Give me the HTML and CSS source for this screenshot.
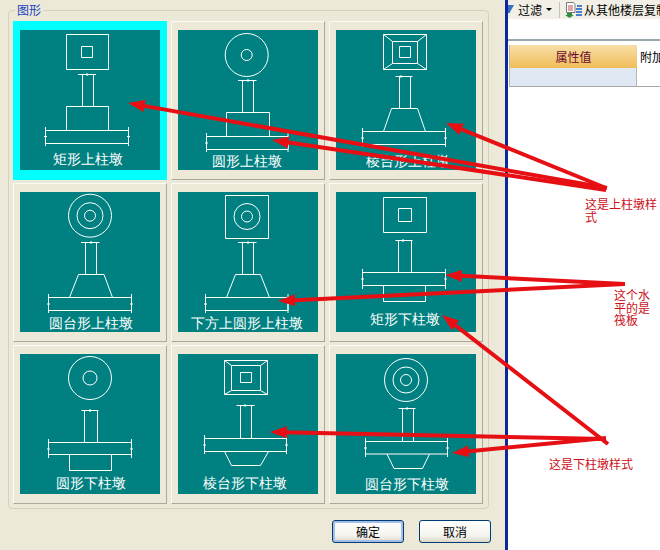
FILE: index.html
```html
<!DOCTYPE html>
<html lang="zh">
<head>
<meta charset="utf-8">
<title>图形</title>
<link rel="stylesheet" href="styles.css">
</head>
<body>
<div class="screen">
  <section class="dialog">
    <div class="group">
      <span class="legend">图形</span>
      <div class="tiles">
        <button class="tile tile-selected"><svg class="art" viewBox="0 0 140 140">
          <path d="M46.5 4.5h42v35h-42zM61.5 16.5h11v11h-11zM58 44.500h18M62.500 44.500v32M73.500 44.500v32M67 43v3M46.500 76.500h42v24M46.500 76.500v24M25.500 100.500h83v13h-83zM25.500 97v19M108.500 97v19M24 106.500h3M107 106.500h3"/>
          <text x="68" y="134">矩形上柱墩</text></svg></button>
        <button class="tile"><svg class="art" viewBox="0 0 140 140">
          <circle cx="68.700" cy="25" r="21.500"/><circle cx="68.700" cy="25" r="5.500"/>
          <path d="M60 50.500h18.500M64.500 50.500v32M75.500 50.500v32M70 49v3M48.500 82.500h43v24M48.500 82.500v24M28.500 106.500h81.500v13h-81.500zM28.500 103v19M110 103v19M27 113h3"/>
          <text x="68.700" y="136">圆形上柱墩</text></svg></button>
        <button class="tile"><svg class="art" viewBox="0 0 140 140">
          <path d="M47.500 4.500h43v35h-43zM56.500 11.500h25v22h-25zM63.500 16.500h11v11h-11zM47.500 4.500l9 7M90.500 4.500l-9 7M47.500 39.500l9-6M90.500 39.500l-9-6M59.500 46.500h17M63.500 46.500v32M74.500 46.500v32M65 45v3M55.500 78.500h26l8 23M55.500 78.500l-8 23M26.500 101.500h83v13h-83zM26.500 98v19M109.500 98v19M25 108h3M108 108h3"/>
          <text x="71.700" y="136">棱台形上柱墩</text></svg></button>
        <button class="tile"><svg class="art" viewBox="0 0 140 140">
          <circle cx="70" cy="23.700" r="21.500"/><circle cx="70" cy="23.700" r="13"/><circle cx="70" cy="23.700" r="5.500"/>
          <path d="M61 50.500h18.500M65.500 50.500v32M76.500 50.500v32M71 49v3M58.500 82.500h25.500l8.500 23M58.500 82.500l-9 23M28.500 105.500h83v13h-83zM28.500 102v19M111.500 102v19M27 112h3M110 112h3"/>
          <text x="70.500" y="136">圆台形上柱墩</text></svg></button>
        <button class="tile"><svg class="art" viewBox="0 0 140 140">
          <path d="M47.500 3.500h43v43h-43z"/><circle cx="69" cy="24.500" r="13"/><circle cx="69" cy="24.500" r="5.500"/>
          <path d="M60 50.500h18.500M64.500 50.500v32M75.500 50.500v32M70 49v3M57.500 82.500h25l9 23M57.500 82.500l-9 23M27.500 105.500h82.500v13h-82.500zM27.500 102v19M110 102v19M26 112h3"/>
          <text x="68.700" y="136">下方上圆形上柱墩</text></svg></button>
        <button class="tile"><svg class="art" viewBox="0 0 140 140">
          <path d="M47.500 5.500h43v35h-43zM62.500 16.500h13v13h-13zM59.500 48.500h17M62.500 48.500v32M75.500 48.500v32M67 47v3M26.500 80.500h83v13h-83zM26.500 77v20M109.500 77v20M25 87h3M108 87h3M47.500 93.500v16h42v-16"/>
          <text x="68.700" y="132">矩形下柱墩</text></svg></button>
        <button class="tile"><svg class="art" viewBox="0 0 140 140">
          <circle cx="70" cy="24" r="21.500"/><circle cx="70" cy="24" r="7"/>
          <path d="M61.500 56.500h17M64.500 56.500v32M77.500 56.500v32M70 55v3M28.500 88.500h83v12h-83zM28.500 85v19M111.500 85v19M27 95h3M110 95h3M49.500 100.500v16h42v-16"/>
          <text x="70.500" y="134">圆形下柱墩</text></svg></button>
        <button class="tile"><svg class="art" viewBox="0 0 140 140">
          <path d="M46.500 6.500h43v34h-43zM53.500 11.500h29v25h-29zM62.500 18.500h11v10h-11zM46.500 6.500l7 5M89.500 6.500l-7 5M46.500 40.500l7-4M89.500 40.500l-7-4M58.500 51.500h18M62.500 51.500v33M73.500 51.500v33M67 50v3M26.500 84.500h82v13h-82zM26.500 81v19M108.500 81v19M25 91h3M107 91h3M46.500 97.500l7 14h29l8-14"/>
          <text x="66.700" y="134">棱台形下柱墩</text></svg></button>
        <button class="tile"><svg class="art" viewBox="0 0 140 140">
          <circle cx="70" cy="26" r="21.500"/><circle cx="70" cy="26" r="13"/><circle cx="70" cy="26" r="5.500"/>
          <path d="M62.500 54.500h17M66.500 54.500v33M77.500 54.500v33M71 53v3M29.500 87.500h82v12.500h-82zM29.500 84v19M111.500 84v19M28 94h3M110 94h3M51 100l7 14.500h28.500l7-14.500"/>
          <text x="71" y="135">圆台形下柱墩</text></svg></button>
      </div>
    </div>
    <div class="actions">
      <button class="btn btn-default">确定</button>
      <button class="btn">取消</button>
    </div>
  </section>

  <div class="divider"></div>

  <section class="panel">
    <div class="toolbar">
      <svg class="tool-funnel" viewBox="0 0 6 14"><path d="M0 2h6L2 9v1H0z"/></svg>
      <span class="tool-label">过滤</span>
      <span class="tool-caret"></span>
      <span class="tool-sep"></span>
      <svg class="tool-copy" viewBox="0 0 17 16">
        <path class="doc" d="M1.500.5h7l1.500 2v8h-8.500z"/>
        <path class="doc-lines" d="M3 4h5M3 6h5M3 8h5"/>
        <path class="doc-arrow" d="M2 11h5v2h2l-4.500 3-4.500-3h2z"/>
        <path class="doc-bars" d="M12 3h5v2h-5zM11 6h6v2h-6zM11 9h6v2h-6zM11 12h6v2h-6z"/>
      </svg>
      <span class="tool-label">从其他楼层复制</span>
    </div>
    <div class="blank"></div>
    <div class="rule"></div>
    <div class="grid">
      <div class="grid-head">属性值</div>
      <div class="grid-next">附加</div>
      <div class="grid-cell"></div>
      <div class="grid-cell-next"></div>
    </div>
  </section>

  <svg class="arrows" viewBox="0 0 660 550">
    <defs>
      <marker id="head" markerUnits="userSpaceOnUse" markerWidth="18" markerHeight="14" refX="5" refY="7" orient="auto">
        <path d="M0 1l17 6-17 6z"/>
      </marker>
    </defs>
    <line x1="607" y1="188" x2="139.800" y2="105.100" marker-end="url(#head)"/>
    <line x1="606" y1="190" x2="283.900" y2="141.800" marker-end="url(#head)"/>
    <line x1="606" y1="188" x2="457.100" y2="127.500" marker-end="url(#head)"/>
    <line x1="625" y1="284" x2="457" y2="275.600" marker-end="url(#head)"/>
    <line x1="625" y1="284" x2="290" y2="300.400" marker-end="url(#head)"/>
    <line x1="608" y1="444" x2="451.500" y2="322.300" marker-end="url(#head)"/>
    <line x1="606" y1="439" x2="282" y2="432.200" marker-end="url(#head)"/>
    <line x1="606" y1="438" x2="464" y2="451.800" marker-end="url(#head)"/>
  </svg>

  <p class="note note-upper">这是上柱墩样式</p>
  <p class="note note-raft">这个水平的是筏板</p>
  <p class="note note-lower">这是下柱墩样式</p>
</div>
</body>
</html>
```

FILE: styles.css
```css
* {
  box-sizing: border-box;
}

html,
body {
  margin: 0;
  padding: 0;
  background: #ece9d8;
}

.screen {
  position: relative;
  display: flex;
  width: 660px;
  height: 550px;
  overflow: hidden;
  font-family: "Noto Sans CJK SC", "Liberation Sans", sans-serif;
  font-size: 12px;
}

.dialog {
  width: 505px;
  padding: 10px 14px 0 8px;
  background: #ece9d8;
}

.group {
  position: relative;
  width: 481px;
  height: 499px;
  padding: 10px 4px 0 4px;
  border: 1px solid #d4d1bf;
  border-radius: 4px;
}

.legend {
  position: absolute;
  top: -9px;
  left: 6px;
  padding: 0 2px;
  background: #ece9d8;
  color: #1a3fc0;
  line-height: 16px;
}

.tiles {
  display: grid;
  grid-template-columns: repeat(3, 154px);
  grid-auto-rows: 159px;
  gap: 3px 4px;
}

.tile {
  display: block;
  margin: 0;
  padding: 8px 6px 9px 6px;
  border: 1px solid;
  border-color: #fbfaf4 #aca899 #aca899 #fbfaf4;
  background: #ece9d8;
}

.tile-selected {
  border-color: #00ffff;
  background: #00ffff;
}

.art {
  display: block;
  width: 140px;
  height: 140px;
  background: #008080;
  fill: none;
  stroke: #fff;
  stroke-width: 1;
}

.art text {
  fill: #fff;
  stroke: none;
  font-size: 14px;
  font-weight: 300;
  text-anchor: middle;
}

.actions {
  display: flex;
  justify-content: flex-end;
  gap: 15px;
  margin-top: 11px;
}

.btn {
  width: 72px;
  height: 23px;
  padding: 0;
  border: 1px solid #003c74;
  border-radius: 3px;
  background: linear-gradient(#fff, #f4f3ee 70%, #dcd8c8);
  color: #000;
  font: inherit;
  line-height: 20px;
}

.btn-default {
  box-shadow: inset 0 0 0 2px #a6bde8;
}

.divider {
  flex: none;
  width: 3px;
  background: #0a2a9c;
}

.panel {
  flex: 1;
  min-width: 0;
  overflow: hidden;
  background: #fff;
}

.toolbar {
  display: flex;
  align-items: center;
  height: 19px;
  background: #f2f0e6;
  white-space: nowrap;
}

.tool-funnel {
  flex: none;
  width: 6px;
  height: 14px;
  fill: #3a6fc4;
}

.tool-label {
  flex: none;
  color: #000;
  line-height: 16px;
}

.tool-funnel + .tool-label {
  margin-left: 4px;
}

.tool-caret {
  flex: none;
  width: 0;
  height: 0;
  margin-left: 4px;
  border-top: 3px solid #000;
  border-right: 3px solid transparent;
  border-left: 3px solid transparent;
}

.tool-sep {
  flex: none;
  width: 1px;
  height: 16px;
  margin: 0 5px 0 7px;
  background: #c6c3b4;
}

.tool-copy {
  flex: none;
  width: 17px;
  height: 16px;
  margin-right: 2px;
}

.doc {
  fill: #fff;
  stroke: #7a7a7a;
}

.doc-lines {
  fill: none;
  stroke: #c05050;
}

.doc-arrow {
  fill: #2f8f3f;
}

.doc-bars {
  fill: #4a80c8;
}

.blank {
  height: 20px;
}

.rule {
  height: 2px;
  background: #9aa7ad;
}

.grid {
  display: grid;
  grid-template-columns: 127px 1fr;
  grid-template-rows: 23px 19px;
  margin: 4px 0 0 1px;
  border-left: 1px solid #b8b8b0;
}

.grid-head {
  background: linear-gradient(#f8dfa8, #f0bc58);
  color: #6a0a2c;
  line-height: 23px;
  text-align: center;
}

.grid-next {
  padding-left: 3px;
  color: #000;
  line-height: 23px;
  white-space: nowrap;
}

.grid-cell {
  border-right: 1px solid #b8b8b0;
  border-bottom: 1px solid #a8a8a8;
  background: #e0e8f4;
}

.grid-cell-next {
  border-bottom: 1px solid #a8a8a8;
}

.arrows {
  position: absolute;
  top: 0;
  left: 0;
  width: 660px;
  height: 550px;
  pointer-events: none;
}

.arrows line {
  stroke: #e60f14;
  stroke-width: 4;
}

.arrows marker path {
  fill: #e60f14;
}

.note {
  position: absolute;
  margin: 0;
  color: #cc1018;
  font-size: 12px;
  line-height: 13px;
}

.note-upper {
  top: 197px;
  left: 585px;
  width: 73px;
}

.note-raft {
  top: 289px;
  left: 614px;
  width: 37px;
  line-height: 12.5px;
}

.note-lower {
  top: 457px;
  left: 549px;
  white-space: nowrap;
}
```
